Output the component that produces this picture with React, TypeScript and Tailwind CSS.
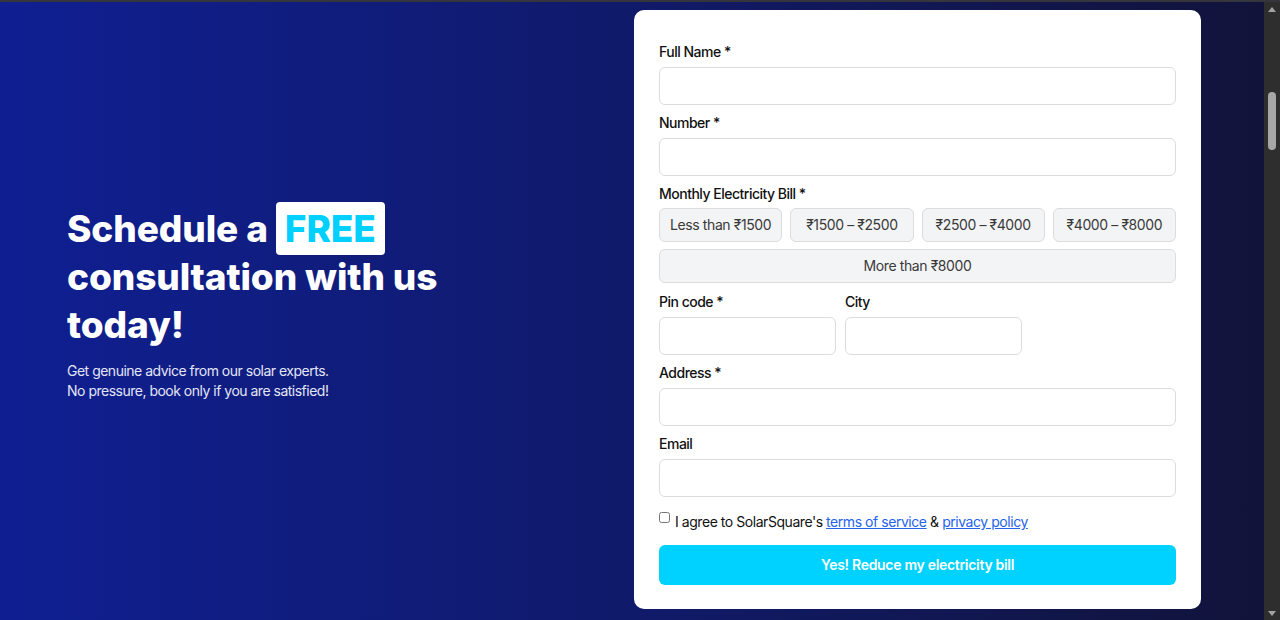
import { useState } from "react"

const bills = ["Less than ₹1500", "₹1500 – ₹2500", "₹2500 – ₹4000", "₹4000 – ₹8000"]

function Field({ label, className = "" }: { label: string; className?: string }) {
  return (
    <div className={"flex flex-col " + className}>
      <label className="text-sm leading-5 font-medium tracking-[-0.5px] text-[#111111]">{label}</label>
      <input className="mt-[5px] h-[38px] w-full rounded-md border border-[#dcdcdc] bg-white px-3 text-sm outline-none" />
    </div>
  )
}

export default function App() {
  const [bill, setBill] = useState<string | null>(null)

  return (
    <div className="flex h-[620px] w-full flex-col overflow-hidden font-['Inter','Noto_Sans',sans-serif]">
      {/* top edge */}
      <div className="h-[2px] w-full bg-[#34353d]" />

      <div className="flex flex-1">
        {/* page */}
        <main className="flex flex-1 bg-gradient-to-r from-[#0f1f92] via-[#101a6a] to-[#11133a]">
          <section className="flex flex-1 items-center pl-[67px] pb-[16px]">
            <div>
              <h1 className="text-[37px] font-extrabold leading-[48px] tracking-[-0.1px] text-white">
                Schedule a{" "}
                <span className="rounded bg-white px-[9px] py-[4px] text-[#00d0ff]">FREE</span>
                <br />
                consultation with us
                <br />
                today!
              </h1>
              <p className="mt-3 text-sm leading-5 tracking-[-0.5px] text-[#e3e5f5]">
                Get genuine advice from our solar experts.
                <br />
                No pressure, book only if you are satisfied!
              </p>
            </div>
          </section>

          <div className="mr-[63px] mt-2 self-start w-[567px] rounded-[10px] bg-white px-[25px] pt-8 pb-6">
            <form className="flex flex-col gap-2" onSubmit={(e) => e.preventDefault()}>
              <Field label="Full Name *" />
              <Field label="Number *" />

              <div className="flex flex-col">
                <label className="text-sm leading-5 font-medium tracking-[-0.5px] text-[#111111]">
                  Monthly Electricity Bill *
                </label>
                <div className="mt-1 grid grid-cols-4 gap-2">
                  {bills.map((b) => (
                    <button
                      key={b}
                      type="button"
                      onClick={() => setBill(b)}
                      className={
                        "h-[34px] rounded-md border text-sm tracking-[-0.4px] text-[#3a3a3a] " +
                        (bill === b ? "border-[#00d0ff] bg-[#e6faff]" : "border-[#dcdcdc] bg-[#f3f4f6]")
                      }
                    >
                      {b}
                    </button>
                  ))}
                </div>
                <button
                  type="button"
                  onClick={() => setBill("more")}
                  className="mt-[7px] h-[34px] w-full rounded-md border border-[#dcdcdc] bg-[#f3f4f6] text-sm tracking-[-0.4px] text-[#3a3a3a]"
                >
                  More than ₹8000
                </button>
              </div>

              <div className="mt-px flex gap-[9px]">
                <Field label="Pin code *" className="w-[177px]" />
                <Field label="City" className="w-[177px]" />
              </div>

              <Field label="Address *" />
              <Field label="Email" />

              <div className="mt-[3px] flex items-start text-sm leading-5 tracking-[-0.45px] text-[#111111]">
                <input type="checkbox" className="mr-[5px] mt-[4px] h-[11px] w-[11px]" />
                <span className="mt-[4px]">
                  I agree to SolarSquare's{" "}
                  <a className="text-[#2563eb] underline">terms of service</a> &amp;{" "}
                  <a className="text-[#2563eb] underline">privacy policy</a>
                </span>
              </div>

              <button
                type="submit"
                className="mt-[5px] h-[40px] w-full rounded-md bg-[#00d2ff] text-sm font-semibold tracking-[-0.3px] text-white"
              >
                Yes! Reduce my electricity bill
              </button>
            </form>
          </div>
        </main>

        {/* scrollbar */}
        <div className="flex w-4 flex-col items-center bg-[#2e2e2e]">
          <div className="mt-[5px] h-0 w-0 border-x-[4px] border-b-[5px] border-x-transparent border-b-[#a3a3a3]" />
          <div className="mt-[80px] h-[58px] w-2 rounded bg-[#a6a6a6]" />
          <div className="flex-1" />
          <div className="mb-[4px] h-0 w-0 border-x-[4px] border-t-[5px] border-x-transparent border-t-[#a3a3a3]" />
        </div>
      </div>
    </div>
  )
}
